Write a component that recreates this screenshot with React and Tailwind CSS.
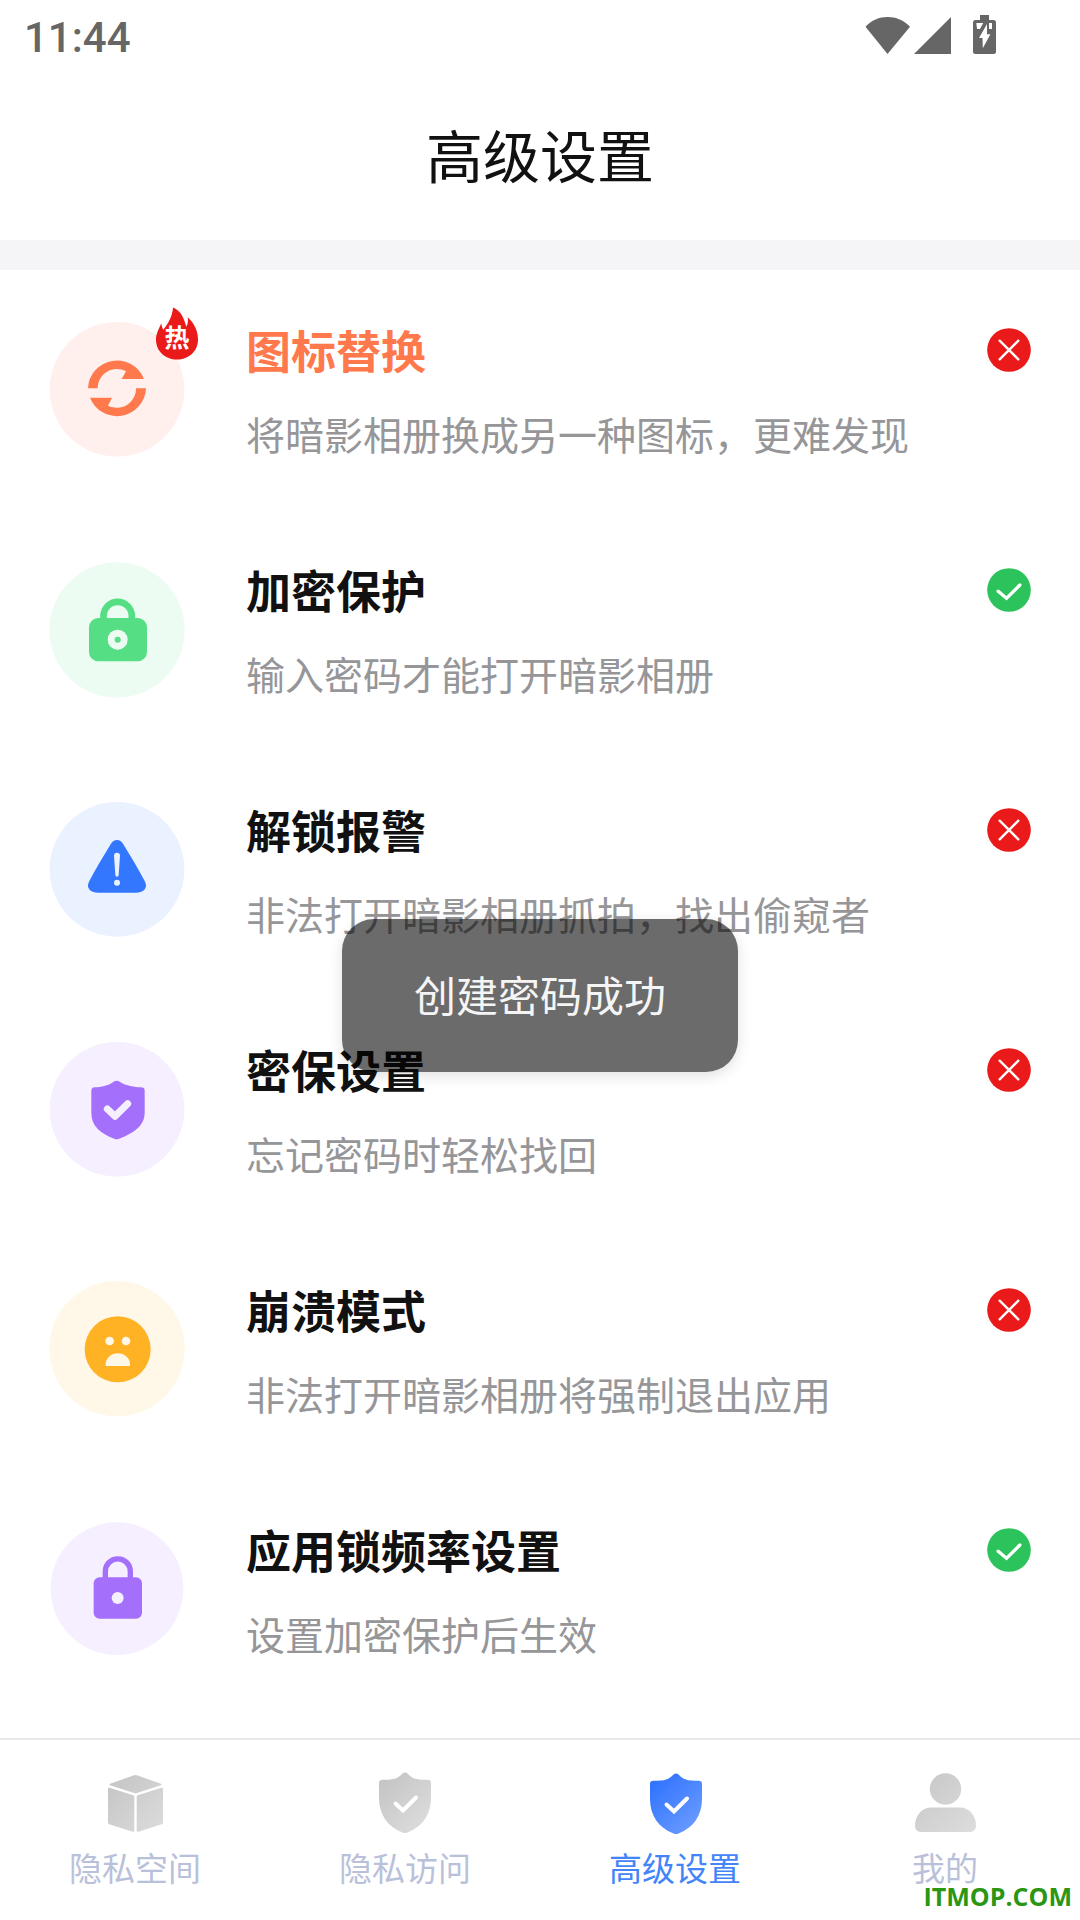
function ReplaceIcon() {
  return (
    <svg viewBox="0 0 420 420" className="size-full" aria-hidden="true">
      <circle cx="210" cy="208" r="202" fill="#fff0ed" />
      <g fill="#ff794d">
        <path d="M123 205A87 87 0 0 1 291 177H224L237 154A57.5 57.5 0 0 0 152 205Z" />
        <path d="M297 205A87 87 0 0 1 129 233H195L183 257A57.5 57.5 0 0 0 267 205Z" />
      </g>
    </svg>
  )
}

function EncryptIcon() {
  return (
    <svg viewBox="0 0 420 420" className="size-full" aria-hidden="true">
      <circle cx="210" cy="210" r="203" fill="#edfcf2" />
      <path d="M169.5 180V168a42.5 42.5 0 0 1 85 0V180" fill="none" stroke="#55de83" strokeWidth="20" />
      <rect x="126" y="174" width="174" height="130" rx="28" fill="#55de83" />
      <circle cx="212" cy="239" r="30" fill="#edfcf2" />
      <circle cx="212" cy="239" r="9" fill="#55de83" />
    </svg>
  )
}

function AlarmIcon() {
  return (
    <svg viewBox="0 0 420 420" className="size-full" aria-hidden="true">
      <circle cx="210" cy="208" r="202" fill="#eaf1ff" />
      <path
        d="M191 133C200 116 220 116 229 133C252 170 275 210 293 243C304 263 292 278 266 278H154C128 278 116 263 127 243C145 210 168 170 191 133Z"
        fill="#3377ff"
      />
      <path d="M201 167a9 9 0 0 1 18 0L215 225a5 5 0 0 1-10 0Z" fill="#eaf1ff" />
      <circle cx="210" cy="248" r="9" fill="#eaf1ff" />
    </svg>
  )
}

function ProtectIcon() {
  return (
    <svg viewBox="0 0 420 420" className="size-full" aria-hidden="true">
      <circle cx="210" cy="208" r="202" fill="#f5efff" />
      <path
        d="M200 125Q209 119 218 125C238 138 262 141 282 142Q293 142 293 152V218C293 258 258 280 216 296Q209 299 202 296C160 280 133 258 133 218V152Q133 143 143 142C163 141 182 138 200 125Z"
        fill="#a46ffa"
      />
      <path
        d="M181 207L204 229L242 191"
        fill="none"
        stroke="#f5efff"
        strokeWidth="21"
        strokeLinecap="round"
        strokeLinejoin="round"
      />
    </svg>
  )
}

function CrashIcon() {
  return (
    <svg viewBox="0 0 420 420" className="size-full" aria-hidden="true">
      <circle cx="210" cy="206" r="203" fill="#fff7e8" />
      <circle cx="212" cy="208" r="99" fill="#ffb224" />
      <g fill="#fff7e8">
        <circle cx="188" cy="183" r="13" />
        <circle cx="237" cy="183" r="13" />
        <path d="M176 258V252A36.5 32 0 0 1 249 252V258Z" />
      </g>
    </svg>
  )
}

function AppLockIcon() {
  return (
    <svg viewBox="0 0 420 420" className="size-full" aria-hidden="true">
      <circle cx="210" cy="206" r="199" fill="#f5efff" />
      <path d="M175 176V154a37.5 37.5 0 0 1 75 0V176" fill="none" stroke="#a46ffa" strokeWidth="16" />
      <rect x="140" y="172" width="145" height="124" rx="18" fill="#a46ffa" />
      <circle cx="212" cy="234" r="18" fill="#f5efff" />
    </svg>
  )
}

function HotBadge() {
  return (
    <span className="absolute -top-[13px] -right-[11px] h-[53px] w-[42px]">
      <svg viewBox="468 50 126 158" className="size-full" aria-hidden="true">
        <path
          d="M519 51C545 62 552 85 559 109C564 100 565 90 563 80C582 97 594 120 594 147C594 183 566 207 531 207C496 207 468 183 468 147C468 128 477 115 484 98C485 107 487 113 490 118C503 100 517 80 519 51Z"
          fill="#ea1a1a"
        />
      </svg>
      <span className="absolute inset-x-0 bottom-3 text-center text-[25px] leading-6 font-bold text-white">热</span>
    </span>
  )
}

function StateIcon({ on }) {
  return (
    <svg viewBox="0 0 132 132" className="size-11" role="img" aria-label={on ? '已开启' : '未开启'}>
      <circle cx="66" cy="66" r="65.5" fill={on ? '#2dc35c' : '#ea1a1a'} />
      <path
        d={on ? 'M33.5 70L58.5 91L98.5 51' : 'M38 38L94 94M94 38L38 94'}
        fill="none"
        stroke="#fff"
        strokeWidth={on ? 10 : 7}
        strokeLinecap="round"
      />
    </svg>
  )
}

function SpaceIcon() {
  return (
    <svg viewBox="0 0 60 64" className="h-16 w-[60px]" aria-hidden="true">
      <defs>
        <linearGradient id="cube" x1="3" y1="6" x2="57" y2="60" gradientUnits="userSpaceOnUse">
          <stop stopColor="#c4c4c4" />
          <stop offset="1" stopColor="#dcdcdc" />
        </linearGradient>
      </defs>
      <g fill="url(#cube)">
        <path d="M29 4.3Q30.500 3.700 32 4.300L56 12.800Q57 13.500 56 14.200L32 22Q30.500 22.700 29 22L5 14.200Q4 13.500 5 12.800Z" />
        <path d="M3 18Q3 16.500 4.600 16.800L28.200 24.200Q29.300 24.700 29.300 26V59.500Q29 61 27.500 60.700L4.300 53.200Q3 52.700 3 51.300Z" />
        <path d="M58 18Q58 16.500 56.400 16.800L32.800 24.200Q31.700 24.700 31.700 26V59.500Q32 61 33.500 60.700L56.700 53.200Q58 52.700 58 51.300Z" />
      </g>
    </svg>
  )
}

function ShieldIcon({ id, from, to, viewBox }) {
  return (
    <svg viewBox={viewBox} className="h-16 w-[60px]" aria-hidden="true">
      <defs>
        <linearGradient id={id} x1="6" y1="8" x2="52" y2="54" gradientUnits="userSpaceOnUse">
          <stop stopColor={from} />
          <stop offset="1" stopColor={to} />
        </linearGradient>
      </defs>
      <path
        d="M27.500 2.500Q30 .3 32.500 2.500C37.500 8 42 9 52.500 8.700Q56 8.700 56 12V27C56 43 48 55.500 32.500 61.500Q30 62.500 27.500 61.500C12 55.500 4 43 4 27V12Q4 8.700 7.500 8.700C18 9 22.500 8 27.500 2.500Z"
        fill={`url(#${id})`}
      />
      <path
        d="M20.500 32.500L28 39.500L41 26.500"
        fill="none"
        stroke="#fff"
        strokeWidth="4"
        strokeLinecap="round"
      />
    </svg>
  )
}

function UserIcon() {
  return (
    <svg viewBox="0 0 64 64" className="size-16" aria-hidden="true">
      <defs>
        <linearGradient id="user" x1="6" y1="6" x2="58" y2="62" gradientUnits="userSpaceOnUse">
          <stop stopColor="#c8c8c8" />
          <stop offset="1" stopColor="#dcdcdc" />
        </linearGradient>
      </defs>
      <g fill="url(#user)">
        <circle cx="32.500" cy="18" r="15.700" />
        <path d="M18 36.500H47C56 36.500 63 44.500 63 54.500Q63 61 57 61H8Q2 61 2 54.500C2 44.500 9 36.500 18 36.500Z" />
      </g>
    </svg>
  )
}

const settings = [
  { title: '图标替换', desc: '将暗影相册换成另一种图标，更难发现', icon: <ReplaceIcon />, on: false, hot: true },
  { title: '加密保护', desc: '输入密码才能打开暗影相册', icon: <EncryptIcon />, on: true },
  { title: '解锁报警', desc: '非法打开暗影相册抓拍，找出偷窥者', icon: <AlarmIcon />, on: false },
  { title: '密保设置', desc: '忘记密码时轻松找回', icon: <ProtectIcon />, on: false },
  { title: '崩溃模式', desc: '非法打开暗影相册将强制退出应用', icon: <CrashIcon />, on: false },
  { title: '应用锁频率设置', desc: '设置加密保护后生效', icon: <AppLockIcon />, on: true },
]

const tabs = [
  { label: '隐私空间', icon: <SpaceIcon /> },
  { label: '隐私访问', icon: <ShieldIcon id="visit" from="#c4c4c4" to="#dcdcdc" viewBox="0 0 60 64" /> },
  {
    label: '高级设置',
    icon: <ShieldIcon id="advanced" from="#2f72ff" to="#6a9bff" viewBox="-1 -1 60 64" />,
    active: true,
  },
  { label: '我的', icon: <UserIcon /> },
]

function StatusBar() {
  return (
    <div className="flex h-[72px] items-start justify-between pr-[83px] pl-6 text-[#666]">
      <span className="font-[Roboto,sans-serif] text-[42px] leading-[76px] font-medium">11:44</span>
      <svg viewBox="0 0 132 40" className="mt-[15px] h-10 w-[132px]" fill="currentColor" aria-hidden="true">
        <path d="M.5 11.700C12 -1.200 33 -1.200 45 11.700L22.500 39Z" />
        <path d="M49 39H86V2Z" />
        <path d="M115 0h9v5h4.500a2.500 2.500 0 0 1 2.500 2.500v29a2.500 2.500 0 0 1-2.500 2.500h-18a2.500 2.500 0 0 1-2.500-2.500v-29a2.500 2.500 0 0 1 2.500-2.500h4.500z" />
        <path d="M122 9V19.300H125.400L117.800 33.300L117.500 23H114ZM111.300 8H118.200L115 14H112ZM124 8H127V14H124Z" fill="#fff" />
      </svg>
    </div>
  )
}

function SettingRow({ item }) {
  return (
    <li>
      <button type="button" className="flex h-60 w-full items-center pr-[49px] pl-[47px] text-left">
        <span className="relative size-[140px] shrink-0">
          {item.icon}
          {item.hot && <HotBadge />}
        </span>
        <span className="ml-[59px] flex flex-1 flex-col gap-[17px] pt-[3px]">
          <span className="flex items-center justify-between">
            <span className={item.hot ? 'text-[45px] leading-[66px] font-bold text-[#ff794d]' : 'text-[45px] leading-[66px] font-bold text-[#111]'}>
              {item.title}
            </span>
            <StateIcon on={item.on} />
          </span>
          <span className="text-[39px] leading-[66px] text-[#969699]">{item.desc}</span>
        </span>
      </button>
    </li>
  )
}

function TabBar() {
  return (
    <nav className="grid h-[182px] grid-cols-4 border-t-2 border-[#e9e9e9]">
      {tabs.map((tab) => (
        <a
          key={tab.label}
          href="#"
          aria-current={tab.active ? 'page' : undefined}
          className={
            tab.active
              ? 'flex flex-col items-center pt-[31px] text-[#4385f8]'
              : 'flex flex-col items-center pt-[31px] text-[#b9c1da]'
          }
        >
          {tab.icon}
          <span className="mt-2 text-[33px] leading-12">{tab.label}</span>
        </a>
      ))}
    </nav>
  )
}

export default function App() {
  return (
    <div className="relative flex min-h-screen flex-col bg-white font-['Noto_Sans_CJK_SC',sans-serif]">
      <header className="border-b-[30px] border-[#f5f5f8]">
        <StatusBar />
        <h1 className="h-[168px] text-center text-[57px] leading-[163px] text-[#111]">高级设置</h1>
      </header>

      <main className="flex-1">
        <ul>
          {settings.map((item) => (
            <SettingRow key={item.title} item={item} />
          ))}
        </ul>
      </main>

      <TabBar />

      {/* Toast */}
      <div className="pointer-events-none absolute inset-0 flex items-center justify-center pt-[71px]">
        <div
          role="status"
          className="rounded-[32px] bg-black/58 px-[72px] pt-[43px] pb-[47px] text-[42px] leading-[63px] text-[#f5f5f5] shadow-[0_4px_14px_rgba(0,0,0,0.12)]"
        >
          创建密码成功
        </div>
      </div>

      <span className="absolute right-2 bottom-2 font-['Open_Sans',sans-serif] text-[25px] leading-8 font-bold text-[#2a9614]">
        ITMOP.COM
      </span>
    </div>
  )
}
